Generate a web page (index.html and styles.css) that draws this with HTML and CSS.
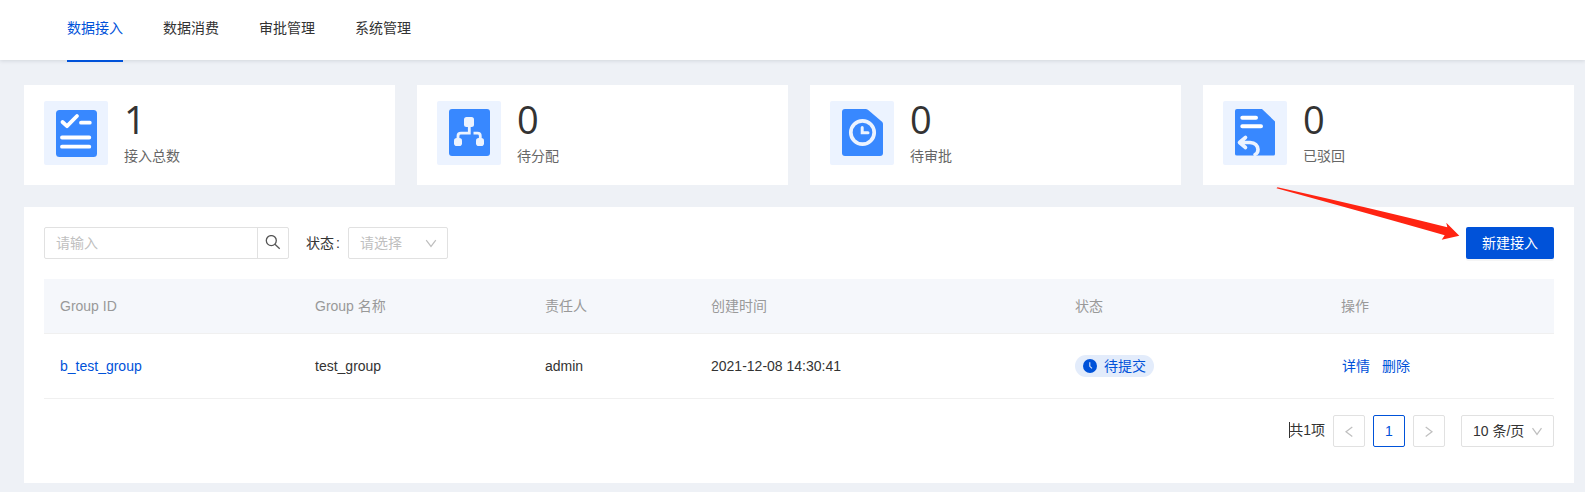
FILE: index.html
```html
<!DOCTYPE html>
<html lang="zh-CN">
<head>
<meta charset="utf-8">
<title>数据接入</title>
<link rel="stylesheet" href="styles.css">
</head>
<body>
<header class="topbar">
  <nav class="nav">
    <a class="nav-item active">数据接入</a>
    <a class="nav-item">数据消费</a>
    <a class="nav-item">审批管理</a>
    <a class="nav-item">系统管理</a>
  </nav>
</header>
<main class="content">
  <section class="stats">
    <div class="card">
      <svg class="stat-icon" viewBox="0 0 64 64">
        <rect width="64" height="64" rx="2" fill="#ecf3ff"/>
        <rect x="12" y="9" width="41" height="47" rx="3.5" fill="#3888ff"/>
        <g fill="none" stroke="#fff" stroke-linecap="round" stroke-linejoin="round">
          <path d="M18.5 21l4.500 4.200L33 15" stroke-width="3.800"/>
          <path d="M37 21.700H45.800M18 36.500H45.300M18 45.700H45.300" stroke-width="3.800"/>
        </g>
      </svg>
      <div class="stat-text"><div class="num">1</div><div class="label">接入总数</div></div>
    </div>
    <div class="card">
      <svg class="stat-icon" viewBox="0 0 64 64">
        <rect width="64" height="64" rx="2" fill="#ecf3ff"/>
        <rect x="12" y="8" width="41" height="47" rx="3" fill="#3888ff"/>
        <g fill="#ecf3ff">
          <rect x="27" y="16" width="10" height="10" rx="2.500"/>
          <rect x="17" y="37" width="8" height="8" rx="2.800"/>
          <rect x="39" y="37" width="8" height="8" rx="2.800"/>
        </g>
        <path d="M32.300 25V32.200H24Q21 32.200 21 35V38M36.500 32.200H40.500Q43.300 32.200 43.300 35V38" fill="none" stroke="#ecf3ff" stroke-width="2.800"/>
      </svg>
      <div class="stat-text"><div class="num">0</div><div class="label">待分配</div></div>
    </div>
    <div class="card">
      <svg class="stat-icon" viewBox="0 0 64 64">
        <rect width="64" height="64" rx="2" fill="#ecf3ff"/>
        <path d="M15 8H35.500Q37 8 38.200 9L52 20.800Q53 21.700 53 23V52Q53 55 50 55H15Q12 55 12 52V11Q12 8 15 8Z" fill="#3888ff"/>
        <circle cx="32.500" cy="31.500" r="11.700" fill="none" stroke="#ecf3ff" stroke-width="3.700"/>
        <path d="M32.200 26.500V31.800H38" fill="none" stroke="#ecf3ff" stroke-width="3" stroke-linecap="round"/>
      </svg>
      <div class="stat-text"><div class="num">0</div><div class="label">待审批</div></div>
    </div>
    <div class="card">
      <svg class="stat-icon" viewBox="0 0 64 64">
        <rect width="64" height="64" rx="2" fill="#ecf3ff"/>
        <path d="M14 8H39L52 20.500V53Q52 54.500 50.500 54.500H14Q12 54.500 12 53V10Q12 8 14 8Z" fill="#3888ff"/>
        <path d="M19.300 16.700H33M19.300 25.300H38" fill="none" stroke="#fff" stroke-width="4" stroke-linecap="round"/>
        <path d="M22.500 36.500L16.500 41.500L22.500 46.500M17.500 41.500H27Q34.500 42 35 48.500Q35 52 32 53.500" fill="none" stroke="#ecf3ff" stroke-width="3.600" stroke-linecap="round" stroke-linejoin="round"/>
      </svg>
      <div class="stat-text"><div class="num">0</div><div class="label">已驳回</div></div>
    </div>
  </section>
  <section class="panel">
    <div class="toolbar">
      <div class="search">
        <span class="search-input">请输入</span>
        <span class="search-btn"><svg width="16" height="16" viewBox="0 0 16 16" fill="none" stroke="#555" stroke-width="1.300"><circle cx="6.300" cy="5.600" r="5"/><path d="M9.900 9.200L14.700 13.700"/></svg></span>
      </div>
      <span class="filter-label">状态<span class="colon">:</span></span>
      <div class="select">
        <span class="placeholder">请选择</span>
        <svg class="chevron" width="12" height="10" viewBox="0 0 12 10"><path d="M1.200 2.200L6 8.400L10.800 2.200"/></svg>
      </div>
      <button class="primary">新建接入</button>
    </div>
    <div class="table">
      <div class="row head">
        <span>Group ID</span><span>Group 名称</span><span>责任人</span><span>创建时间</span><span>状态</span><span>操作</span>
      </div>
      <div class="row">
        <span><a class="link">b_test_group</a></span>
        <span>test_group</span>
        <span>admin</span>
        <span>2021-12-08 14:30:41</span>
        <span class="status-cell"><span class="pill"><svg width="14" height="14" viewBox="0 0 14 14"><circle cx="7" cy="7" r="7" fill="#0052d9"/><path d="M6.800 3.300V7.300L9 9.300" fill="none" stroke="#dce8fb" stroke-width="1.100"/></svg>待提交</span></span>
        <span class="actions"><a class="link">详情</a><a class="link">删除</a></span>
      </div>
    </div>
    <div class="pagination">
      <span class="total">共1项</span>
      <span class="page"><svg class="chevron" width="10" height="12" viewBox="0 0 10 12"><path d="M8.300 2L2 6.700L8.300 11.400"/></svg></span>
      <span class="page current">1</span>
      <span class="page"><svg class="chevron" width="10" height="12" viewBox="0 0 10 12"><path d="M1.700 2L8 6.700L1.700 11.400"/></svg></span>
      <span class="page-size">10 条/页<svg class="chevron" width="12" height="10" viewBox="0 0 12 10"><path d="M1.500 2.200L6 8.400L10.500 2.200"/></svg></span>
    </div>
  </section>
</main>
<svg class="pointer-arrow" width="185" height="56" viewBox="0 0 185 56"><path d="M0.500 1.300L1.500 0.300Q94 21 171.300 40.300L170.300 35.700L183.300 48.700L165.700 52.700L168.700 48.300Q94 27 0.500 1.300Z"/></svg>
</body>
</html>
```
FILE: styles.css
```css
* { box-sizing: border-box; }
body {
  margin: 0;
  height: 492px;
  overflow: hidden;
  background: #eef1f6;
  color: #333;
  font: 14px/22px "Liberation Sans", "Noto Sans CJK SC", sans-serif;
  position: relative;
}
.topbar {
  height: 60px;
  background: #fff;
  box-shadow: 0 1px 4px rgba(0, 21, 41, .12);
  padding-left: 67px;
}
.nav { display: flex; gap: 40px; }
.nav-item { height: 62px; padding-top: 17px; }
.nav-item.active { color: #0052d9; border-bottom: 2px solid #0052d9; }
.content { padding: 25px 11px 0 24px; }
.stats { display: grid; grid-template-columns: repeat(4, 1fr); gap: 22px; }
.card { display: flex; height: 100px; padding: 16px 20px; background: #fff; }
.stat-icon { width: 64px; height: 64px; flex: none; }
.stat-text { padding-left: 16px; }
.num { font: 38px/40px "Open Sans", sans-serif; margin-top: -2px; }
.label { color: #666; margin-top: 6px; }
.panel { margin-top: 22px; height: 276px; background: #fff; padding: 20px; }
.toolbar { display: flex; align-items: center; height: 32px; }
.search {
  display: flex;
  width: 245px;
  height: 32px;
  border: 1px solid #e1e1e1;
  border-radius: 2px;
  color: #bfbfbf;
}
.search-input { flex: 1; padding: 4px 11px; }
.search-btn { display: flex; width: 31px; padding: 7px 0 0 7px; border-left: 1px solid #e1e1e1; }
.filter-label { width: 42px; margin-left: 17px; white-space: nowrap; }
.colon { margin-left: 2px; }
.select {
  display: flex;
  align-items: center;
  justify-content: space-between;
  width: 100px;
  height: 32px;
  padding: 0 10px 0 11px;
  border: 1px solid #e1e1e1;
  border-radius: 2px;
}
.placeholder { color: #bfbfbf; }
.chevron { flex: none; fill: none; stroke: #bfbfbf; stroke-width: 1.2; }
.primary {
  width: 88px;
  height: 32px;
  margin-left: auto;
  padding: 0;
  border: 0;
  border-radius: 2px;
  background: #0052d9;
  color: #fff;
  font: inherit;
  box-shadow: 0 2px 0 rgba(0, 0, 0, .04);
}
.table { margin-top: 20px; }
.row {
  display: grid;
  grid-template-columns: 255px 230px 166px 364px 266px 1fr;
  align-items: center;
  height: 65px;
  padding-left: 16px;
  border-bottom: 1px solid #f0f0f0;
}
.row.head { height: 55px; background: #f5f7fb; color: #999; }
.link { color: #0052d9; }
.status-cell { display: flex; }
.pill {
  display: flex;
  align-items: center;
  gap: 7px;
  width: 79px;
  height: 22px;
  padding-left: 8px;
  border-radius: 11px;
  background: #e3ecfb;
  color: #0052d9;
}
.actions { display: flex; gap: 12px; padding-left: 1px; }
.pagination { display: flex; justify-content: flex-end; margin-top: 16px; }
.total {
  height: 16px;
  line-height: 16px;
  margin: 7px 8px 0 0;
  border-left: 1px solid #333;
  text-indent: -1px;
}
.page {
  display: flex;
  align-items: center;
  justify-content: center;
  width: 32px;
  height: 32px;
  margin-right: 8px;
  border: 1px solid #e1e1e1;
  border-radius: 2px;
}
.page.current { border-color: #0052d9; color: #0052d9; }
.page-size {
  display: flex;
  align-items: center;
  justify-content: space-between;
  width: 93px;
  height: 32px;
  margin-left: 8px;
  padding: 0 10px 0 11px;
  border: 1px solid #e1e1e1;
  border-radius: 2px;
}
.pointer-arrow { position: absolute; left: 1276px; top: 187px; fill: #ff2412; }
```
